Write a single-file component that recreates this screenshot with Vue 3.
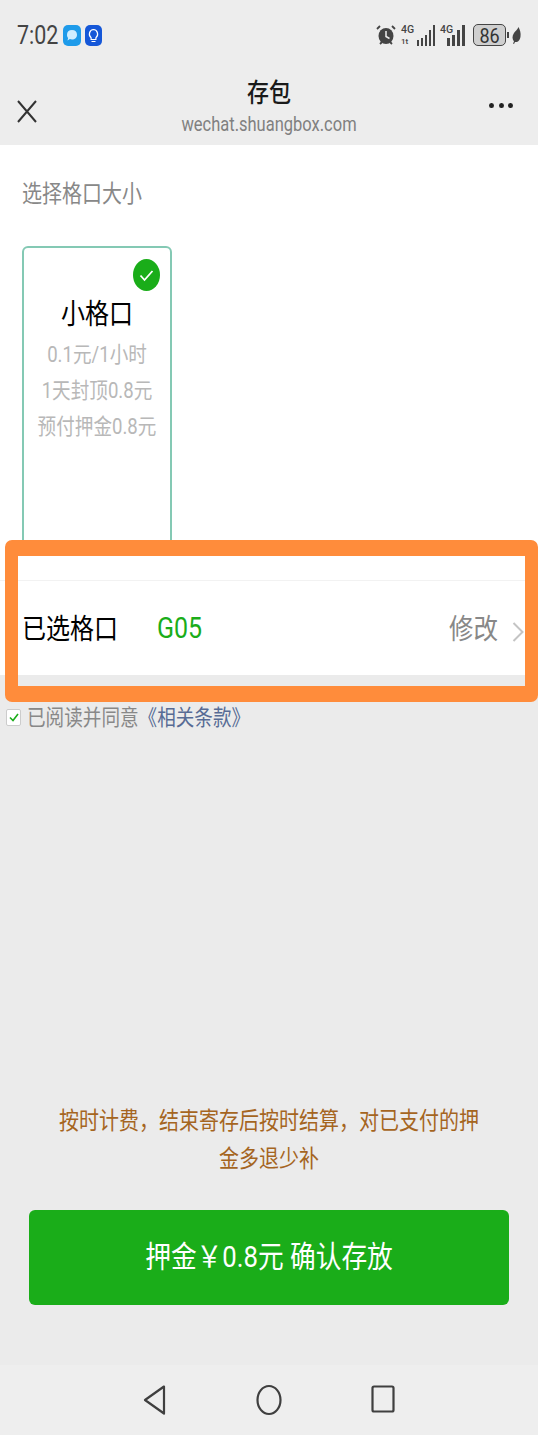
<template>
  <div class="page">
    <!-- status bar -->
    <div class="status">
      <span class="time tall">7:02</span>
      <svg class="app-icon" width="18" height="21" viewBox="0 0 18 21">
        <rect width="18" height="21" rx="5" fill="#1e9bea" />
        <path d="M9 5c3.200 0 5 2 5 4.700 0 2.800-2 4.800-5 4.800-.8 0-1.500-.1-2.100-.4L4.500 15.500l.6-2.500C4.300 12.100 4 11 4 9.700 4 7 5.800 5 9 5z" fill="#cfeeff" />
      </svg>
      <svg class="app-icon" width="17" height="21" viewBox="0 0 17 21">
        <rect width="17" height="21" rx="5" fill="#1557d8" />
        <path d="M8.500 4.500a4.200 4.600 0 0 1 2.400 8.300V14.500H6.100v-1.700A4.200 4.600 0 0 1 8.500 4.500zM6.500 16.500h4" fill="none" stroke="#fff" stroke-width="1.200" />
      </svg>
      <div class="status-right">
        <svg width="20" height="22" viewBox="0 0 20 22">
          <ellipse cx="10" cy="12" rx="7.500" ry="8" fill="#444" />
          <path d="M10 7v5.500l3.500 2" fill="none" stroke="#eee" stroke-width="1.500" />
          <path d="M1 5l3-3M19 5l-3-3M4 20l2-2M16 20l-2-2" stroke="#444" stroke-width="1.800" />
        </svg>
        <div class="signal">
          <span class="net">4G<br /><small>1t</small></span>
          <i v-for="h in [6, 8, 11, 16, 21]" :key="'a' + h" :style="{ height: h + 'px' }"></i>
        </div>
        <div class="signal signal-b">
          <span class="net">4G</span>
          <i v-for="h in [8, 11, 16, 21]" :key="'b' + h" :style="{ height: h + 'px' }"></i>
        </div>
        <div class="battery"><span class="tall">86</span></div>
        <span class="battery-tip"></span>
        <svg width="9" height="17" viewBox="0 0 9 17">
          <path d="M6.500 0C8 3 9 6 8.500 9.500 8 13 6 15.500 3 15L2 17l-1-.5 1-2C0 12 0 9 2 6c1.500-2 3.500-3.500 4.500-6z" fill="#444" />
        </svg>
      </div>
    </div>

    <!-- wechat title bar -->
    <div class="navbar">
      <svg class="close" width="20" height="20" viewBox="0 0 20 20">
        <path d="M1 1l18 21M19 1L1 22" fill="none" stroke="#333" stroke-width="2" />
      </svg>
      <div class="nav-title">
        <span class="title tall">存包</span>
        <span class="domain tall">wechat.shuangbox.com</span>
      </div>
      <div class="dots"><i></i><i></i><i></i></div>
    </div>

    <!-- size picker -->
    <div class="picker">
      <div class="picker-label"><span class="tall">选择格口大小</span></div>
      <div class="size-card">
        <span class="badge">
          <svg width="27" height="32" viewBox="0 0 27 32">
            <ellipse cx="13.500" cy="16" rx="13.500" ry="16" fill="#1aad19" />
            <path d="M7.500 16.500l4 4.500 8-9" fill="none" stroke="#fff" stroke-width="1.800" />
          </svg>
        </span>
        <div class="size-name"><span class="tall">小格口</span></div>
        <div class="size-line"><span class="tall">0.1元/1小时</span></div>
        <div class="size-line"><span class="tall">1天封顶0.8元</span></div>
        <div class="size-line"><span class="tall">预付押金0.8元</span></div>
      </div>
    </div>

    <!-- selected box -->
    <div class="selected">
      <span class="selected-label tall">已选格口</span>
      <span class="selected-code tall">G05</span>
      <span class="selected-edit tall">修改</span>
      <svg class="chevron" width="12" height="22" viewBox="0 0 12 22">
        <path d="M1.500 2l9 9-9 9" fill="none" stroke="#c4c4c4" stroke-width="2" />
      </svg>
    </div>

    <div class="agree">
      <span class="checkbox">
        <svg width="12" height="12" viewBox="0 0 12 12">
          <path d="M2 6.500l3 3 5-6.500" fill="none" stroke="#1aad19" stroke-width="1.600" />
        </svg>
      </span>
      <span class="tall">已阅读并同意</span>
      <span class="terms tall">《相关条款》</span>
    </div>

    <div class="spacer"></div>

    <div class="note">
      <div><span class="tall">按时计费，结束寄存后按时结算，对已支付的押</span></div>
      <div><span class="tall">金多退少补</span></div>
    </div>

    <button class="confirm"><span class="tall">押金￥0.8元 确认存放</span></button>

    <!-- android nav -->
    <div class="sysbar">
      <svg width="24" height="32" viewBox="0 0 24 32">
        <path d="M21 2.500L2 16l19 13.500z" fill="none" stroke="#3f3f3f" stroke-width="2.200" stroke-linejoin="round" />
      </svg>
      <svg width="26" height="32" viewBox="0 0 26 32">
        <ellipse cx="13" cy="16" rx="11.500" ry="14" fill="none" stroke="#3f3f3f" stroke-width="2.200" />
      </svg>
      <svg width="24" height="30" viewBox="0 0 24 30">
        <rect x="1.500" y="1.500" width="21" height="25" rx="1.500" fill="none" stroke="#3f3f3f" stroke-width="2.200" />
      </svg>
    </div>

    <!-- annotation drawn on top of the screenshot -->
    <div class="highlight"></div>
  </div>
</template>

<script setup>
</script>

<style>
html,
body {
  margin: 0;
  padding: 0;
}
</style>

<style scoped>
* {
  box-sizing: border-box;
}

.page {
  position: relative;
  display: flex;
  flex-direction: column;
  width: 538px;
  height: 1435px;
  overflow: hidden;
  background: #ebebeb;
  font-family: Roboto, "Noto Sans CJK SC", sans-serif;
}

/* the reference is stretched vertically */
.tall {
  display: inline-block;
  transform: scaleY(1.17);
}

.status {
  display: flex;
  align-items: center;
  gap: 4px;
  height: 72px;
  padding: 0 17px 2px;
  background: #ededed;
}

.time {
  font-size: 21.500px;
  color: #444;
  margin-right: 1px;
}

.status-right {
  display: flex;
  align-items: center;
  margin-left: auto;
}

.signal {
  display: flex;
  align-items: flex-end;
  gap: 1.500px;
  height: 22px;
  margin-left: 5px;
}

.signal i {
  display: block;
  width: 2.500px;
  background: #444;
}

.signal-b {
  gap: 2px;
}

.signal-b i {
  width: 3px;
}

.signal-b .net {
  width: 5px;
  margin-right: 0;
}

.net {
  width: 14px;
  font-size: 10.500px;
  line-height: 11px;
  font-weight: 500;
  white-space: nowrap;
  color: #444;
  align-self: flex-start;
}

.net small {
  font-size: 8px;
}

.battery {
  display: flex;
  align-items: center;
  justify-content: center;
  width: 33px;
  height: 22px;
  margin-left: 8px;
  border: 1.500px solid #444;
  border-radius: 5px;
  background: #cfcfcf;
  font-size: 18px;
  color: #333;
}

.battery-tip {
  width: 2px;
  height: 6px;
  margin: 0 3px 0 1px;
  background: #444;
}

.navbar {
  display: grid;
  grid-template-columns: 1fr auto 1fr;
  align-items: center;
  height: 73px;
  padding: 0 17px;
  background: #ededed;
}

.close {
  overflow: visible;
  margin-top: 2px;
}

.nav-title {
  display: flex;
  flex-direction: column;
  align-items: center;
  margin-top: -2px;
}

.title {
  margin-bottom: 4px;
  font-size: 22px;
  line-height: 30px;
  font-weight: 500;
  color: #1a1a1a;
}

.domain {
  font-size: 16.500px;
  line-height: 24px;
  color: #808080;
}

.dots {
  display: flex;
  justify-content: flex-end;
  gap: 4.500px;
  margin: -6px 8px 0 0;
}

.dots i {
  display: block;
  width: 5px;
  height: 5.500px;
  border-radius: 50%;
  background: #222;
}

.picker {
  height: 436px;
  padding: 0 22px;
  background: #fff;
  border-bottom: 1px solid #f2f2f2;
}

.picker-label {
  padding-top: 35px;
  height: 101px;
  font-size: 20px;
  line-height: 28px;
  color: #888;
}

.size-card {
  position: relative;
  width: 150px;
  height: 300px;
  padding-top: 50px;
  border: 2px solid #84c9b4;
  border-radius: 6px;
  text-align: center;
}

.badge {
  position: absolute;
  top: 11px;
  right: 10px;
  line-height: 0;
}

.size-name {
  height: 39px;
  font-size: 24px;
  line-height: 34px;
  color: #000;
}

.size-line {
  height: 36px;
  font-size: 18.600px;
  line-height: 36px;
  color: #b8b8b8;
}

.selected {
  position: relative;
  display: flex;
  align-items: center;
  height: 94px;
  padding: 0 14px 4px 22px;
  background: #fff;
}

.selected-label {
  width: 135px;
  font-size: 24px;
  color: #000;
}

.selected-code {
  margin-top: 4px;
  font-size: 25px;
  color: #1aad19;
}

.selected-edit {
  margin-left: auto;
  margin-right: 14px;
  font-size: 24.500px;
  color: #888;
}

.chevron {
  margin-top: 12px;
}

.agree {
  display: flex;
  align-items: center;
  height: 32px;
  margin-top: 24px;
  padding-left: 6px;
  font-size: 18.600px;
  color: #888;
}

.checkbox {
  display: flex;
  align-items: center;
  justify-content: center;
  width: 15px;
  height: 17px;
  margin: 4px 6px 0 0;
  border: 1px solid #ccc;
  border-radius: 2px;
  background: #fff;
}

.terms {
  color: #576b95;
}

.spacer {
  flex: 1;
}

.note {
  padding: 0 50px;
  margin-bottom: 32px;
  font-size: 20px;
  line-height: 38px;
  text-align: center;
  color: #a5651f;
}

.confirm {
  display: block;
  width: 480px;
  height: 95px;
  margin: 0 auto 60px 29px;
  padding: 0 0 8px;
  border: none;
  border-radius: 6px;
  background: #1aad19;
  font-family: inherit;
  font-size: 25.700px;
  color: #fff;
}

.sysbar {
  display: flex;
  align-items: center;
  justify-content: space-between;
  height: 70px;
  padding: 0 143px;
  background: #eeeeee;
}

.highlight {
  position: absolute;
  top: 540px;
  left: 5px;
  width: 533px;
  height: 162px;
  border-style: solid;
  border-color: #ff8c3b;
  border-width: 16px 13px;
  border-radius: 7px;
}
</style>
